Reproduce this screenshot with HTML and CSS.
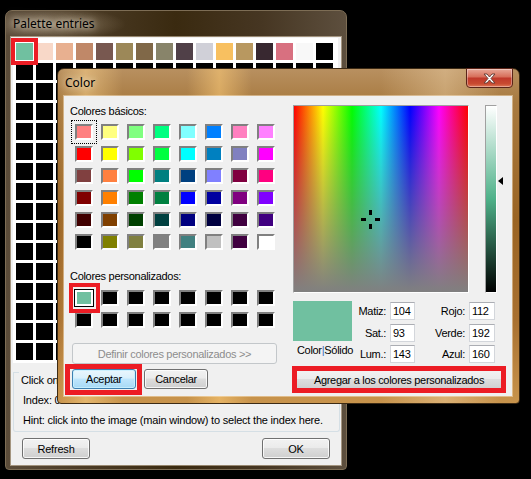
FILE: index.html
```html
<!DOCTYPE html>
<html>
<head>
  <meta charset="utf-8">
  <link rel="stylesheet" href="styles.css">
</head>
<body>
  <div class="desktop">

    <div class="window palette-window">
      <div class="window-title">Palette entries</div>
      <div class="window-client palette-client">
        <div class="palette-panel">
          <div class="palette-row">
            <div class="palette-cell" style="background:#70c0a0"></div>
            <div class="palette-cell" style="background:#f8d8c8"></div>
            <div class="palette-cell" style="background:#e8b090"></div>
            <div class="palette-cell" style="background:#c08868"></div>
            <div class="palette-cell" style="background:#785850"></div>
            <div class="palette-cell" style="background:#9c8858"></div>
            <div class="palette-cell" style="background:#806848"></div>
            <div class="palette-cell" style="background:#88846a"></div>
            <div class="palette-cell" style="background:#504048"></div>
            <div class="palette-cell" style="background:#d0d0d8"></div>
            <div class="palette-cell" style="background:#f8c060"></div>
            <div class="palette-cell" style="background:#b89860"></div>
            <div class="palette-cell" style="background:#382830"></div>
            <div class="palette-cell" style="background:#d87080"></div>
            <div class="palette-cell" style="background:#f8f8f8"></div>
            <div class="palette-cell" style="background:#000000"></div>
          </div>
          <!-- the other 240 entries are all still black -->
          <div class="palette-rest"></div>
        </div>

        <div class="group">
          <div class="group-head"><span class="group-caption">Click on</span></div>
          <div class="group-line">Index: 0</div>
          <div class="group-line">Hint: click into the image (main window) to select the index here.</div>
        </div>

        <div class="palette-buttons">
          <button class="btn">Refresh</button>
          <button class="btn">OK</button>
        </div>
      </div>
    </div>

    <div class="window color-window">
      <div class="window-title">
        Color
        <div class="close-btn">
          <svg width="13" height="11" viewBox="0 0 13 11">
            <path d="M1 1h3l2.5 3 2.5-3h3l-4 4.5 4 4.5h-3l-2.5-3-2.5 3h-3l4-4.5z" fill="#fff" stroke="#6a4038" stroke-width="1"/>
          </svg>
        </div>
      </div>
      <div class="window-client color-client">
        <div class="color-left">
          <div class="label label-basic">Colores básicos:</div>
          <div class="swatches">
            <div class="swatch focus" style="background:#ff8080"></div>
            <div class="swatch" style="background:#ffff80"></div>
            <div class="swatch" style="background:#80ff80"></div>
            <div class="swatch" style="background:#00ff80"></div>
            <div class="swatch" style="background:#80ffff"></div>
            <div class="swatch" style="background:#0080ff"></div>
            <div class="swatch" style="background:#ff80c0"></div>
            <div class="swatch" style="background:#ff80ff"></div>

            <div class="swatch" style="background:#ff0000"></div>
            <div class="swatch" style="background:#ffff00"></div>
            <div class="swatch" style="background:#80ff00"></div>
            <div class="swatch" style="background:#00ff40"></div>
            <div class="swatch" style="background:#00ffff"></div>
            <div class="swatch" style="background:#0080c0"></div>
            <div class="swatch" style="background:#8080c0"></div>
            <div class="swatch" style="background:#ff00ff"></div>

            <div class="swatch" style="background:#804040"></div>
            <div class="swatch" style="background:#ff8040"></div>
            <div class="swatch" style="background:#00ff00"></div>
            <div class="swatch" style="background:#008080"></div>
            <div class="swatch" style="background:#004080"></div>
            <div class="swatch" style="background:#8080ff"></div>
            <div class="swatch" style="background:#800040"></div>
            <div class="swatch" style="background:#ff0080"></div>

            <div class="swatch" style="background:#800000"></div>
            <div class="swatch" style="background:#ff8000"></div>
            <div class="swatch" style="background:#008000"></div>
            <div class="swatch" style="background:#008040"></div>
            <div class="swatch" style="background:#0000ff"></div>
            <div class="swatch" style="background:#0000a0"></div>
            <div class="swatch" style="background:#800080"></div>
            <div class="swatch" style="background:#8000ff"></div>

            <div class="swatch" style="background:#400000"></div>
            <div class="swatch" style="background:#804000"></div>
            <div class="swatch" style="background:#004000"></div>
            <div class="swatch" style="background:#004040"></div>
            <div class="swatch" style="background:#000080"></div>
            <div class="swatch" style="background:#000040"></div>
            <div class="swatch" style="background:#400040"></div>
            <div class="swatch" style="background:#400080"></div>

            <div class="swatch" style="background:#000000"></div>
            <div class="swatch" style="background:#808000"></div>
            <div class="swatch" style="background:#808040"></div>
            <div class="swatch" style="background:#808080"></div>
            <div class="swatch" style="background:#408080"></div>
            <div class="swatch" style="background:#c0c0c0"></div>
            <div class="swatch" style="background:#400040"></div>
            <div class="swatch" style="background:#ffffff"></div>
          </div>

          <div class="label label-custom">Colores personalizados:</div>
          <div class="swatches swatches-custom">
            <div class="swatch current" style="background:#70c0a0"></div>
            <div class="swatch"></div>
            <div class="swatch"></div>
            <div class="swatch"></div>
            <div class="swatch"></div>
            <div class="swatch"></div>
            <div class="swatch"></div>
            <div class="swatch"></div>
            <div class="swatch"></div>
            <div class="swatch"></div>
            <div class="swatch"></div>
            <div class="swatch"></div>
            <div class="swatch"></div>
            <div class="swatch"></div>
            <div class="swatch"></div>
            <div class="swatch"></div>
          </div>

          <button class="btn btn-wide" disabled>Definir colores personalizados &gt;&gt;</button>
          <div class="dialog-buttons">
            <button class="btn btn-default">Aceptar</button>
            <button class="btn">Cancelar</button>
          </div>
        </div>

        <div class="color-right">
          <div class="picker-row">
            <div class="spectrum">
              <svg class="crosshair" width="19" height="19" viewBox="0 0 19 19">
                <rect x="8" y="0" width="3" height="5"/>
                <rect x="8" y="14" width="3" height="5"/>
                <rect x="0" y="8" width="5" height="3"/>
                <rect x="14" y="8" width="5" height="3"/>
              </svg>
            </div>
            <div class="lum">
              <div class="lum-bar"></div>
              <div class="lum-arrow"></div>
            </div>
          </div>

          <div class="values">
            <div class="preview">
              <div class="preview-box"></div>
              <div class="preview-label">Color<span class="sep">|</span>Sólido</div>
            </div>
            <div class="fields">
              <label>Matiz:</label><div class="field">104</div>
              <label>Rojo:</label><div class="field">112</div>
              <label>Sat.:</label><div class="field">93</div>
              <label>Verde:</label><div class="field">192</div>
              <label>Lum.:</label><div class="field">143</div>
              <label>Azul:</label><div class="field">160</div>
            </div>
          </div>

          <button class="btn btn-add">Agregar a los colores personalizados</button>
        </div>
      </div>
    </div>

    <!-- red highlight boxes drawn over the screenshot -->
    <div class="marker marker-cell"></div>
    <div class="marker marker-custom"></div>
    <div class="marker marker-ok"></div>
    <div class="marker marker-add"></div>
  </div>
</body>
</html>
```

FILE: styles.css
```css
body {
  margin: 0;
  background: #000;
  font-family: "Liberation Sans", Arial, sans-serif;
  font-size: 11px;
  color: #000;
}

.desktop {
  position: relative;
  width: 531px;
  height: 479px;
  overflow: hidden;
  background: #000;
}

/* Window frames */
.window {
  position: absolute;
  box-sizing: border-box;
  display: flex;
  flex-direction: column;
  border: 1px solid;
  border-radius: 7px 7px 4px 4px;
}

.window-title {
  display: flex;
  align-items: flex-start;
  font-family: "Noto Sans", "Open Sans", sans-serif;
  font-size: 12px;
  color: #000;
  text-shadow: 0 0 6px rgba(255, 246, 230, 0.9), 0 0 12px rgba(255, 246, 230, 0.6);
}

.window-client {
  background: #f0f0f0;
  box-shadow: 0 0 0 1px rgba(255, 240, 215, 0.45);
}

.palette-window {
  left: 5px;
  top: 10px;
  width: 342px;
  height: 460px;
  padding: 0 5px 4px;
  border-color: #7d6d55;
  background:
    radial-gradient(ellipse 70px 16px at 50px 13px, rgba(255, 235, 205, 0.35), rgba(255, 235, 205, 0)),
    linear-gradient(90deg, #5b4c3a 0%, #4a3a24 25%, #3a2a10 50%, #463622 75%, #5d4f3e 100%);
}

.palette-window .window-title {
  height: 26px;
  line-height: 26px;
  margin: 0 -5px;
  padding: 0 7px;
}

.color-window {
  left: 57px;
  top: 68px;
  width: 463px;
  height: 336px;
  padding: 0 7px 7px 6px;
  border-color: #3c2a14;
  background:
    linear-gradient(90deg, rgba(255, 214, 140, 0) 0, rgba(255, 214, 140, 0.5) 6%, rgba(255, 214, 140, 0) 14%, rgba(255, 214, 140, 0) 28%, rgba(255, 205, 120, 0.55) 35%, rgba(255, 205, 120, 0) 42%, rgba(255, 230, 190, 0) 70%, rgba(255, 230, 190, 0.35) 84%, rgba(255, 230, 190, 0) 96%),
    linear-gradient(180deg, #b89060 0, #a87a40 10%, #9a6424 45%, #a87030 75%, #c8944c 100%);
}

.color-window .window-title {
  height: 27px;
  line-height: 27px;
  margin: 0 -7px 0 -6px;
  padding-left: 7px;
}

.close-btn {
  display: flex;
  align-items: center;
  justify-content: center;
  box-sizing: border-box;
  width: 47px;
  height: 20px;
  margin: -1px 6px 0 auto;
  border: 1px solid #5a2418;
  border-radius: 0 0 4px 4px;
  background: linear-gradient(#e8a898 0%, #d8705c 42%, #c0392b 52%, #c84a30 82%, #e07a5a 100%);
  box-shadow: inset 0 0 0 1px rgba(255, 255, 255, 0.35);
}

/* Palette entries window */
.palette-client {
  flex: 1;
  display: flex;
  flex-direction: column;
  letter-spacing: -0.2px;
}

.palette-panel {
  margin: 1px 3px 0 2px;
  padding: 5px 5px 3px 3px;
  background: #fff;
}

.palette-row {
  display: grid;
  grid-template-columns: repeat(16, 17px);
  column-gap: 3px;
}

.palette-cell {
  height: 17px;
}

.palette-rest {
  height: 297px;
  margin-top: 3px;
  background-color: #000;
  background-image:
    linear-gradient(90deg, transparent 17px, #fff 17px),
    linear-gradient(180deg, transparent 17px, #fff 17px);
  background-size: 20px 20px;
}

.group {
  margin: 9px 1px 0 2px;
  padding-bottom: 4px;
  border: 1px solid #d5dfe5;
  border-top: 0;
  border-radius: 0 0 3px 3px;
}

.group-head {
  display: flex;
  line-height: 13px;
  white-space: nowrap;
  overflow: hidden;
}

.group-head::before {
  content: "";
  flex: none;
  width: 5px;
  border-top: 1px solid #d5dfe5;
}

.group-head::after {
  content: "";
  flex: 1;
  border-top: 1px solid #d5dfe5;
}

.group-caption {
  padding: 2px 2px 0;
}

.group-line {
  margin-top: 7px;
  padding-left: 9px;
  line-height: 13px;
  white-space: nowrap;
}

.palette-buttons {
  display: flex;
  justify-content: space-between;
  padding: 6px 11px 0;
}

.palette-buttons .btn {
  width: 68px;
  height: 21px;
}

/* Buttons */
.btn {
  box-sizing: border-box;
  padding: 0;
  font-family: inherit;
  font-size: 11px;
  letter-spacing: inherit;
  color: #000;
  border: 1px solid #707070;
  border-radius: 3px;
  background: linear-gradient(#f2f2f2 0%, #ebebeb 45%, #dddddd 50%, #cfcfcf 100%);
  box-shadow: inset 0 0 0 1px rgba(255, 255, 255, 0.8);
}

.btn-default {
  border-color: #3c7fb1;
  background: linear-gradient(#eaf6fd 0%, #d9f0fc 45%, #bee6fd 50%, #a7d9f5 100%);
  box-shadow: inset 0 0 0 1px rgba(200, 240, 255, 0.9);
}

.btn:disabled {
  color: #8d8d8d;
  border-color: #c3c7ca;
  background: #f4f4f4;
  box-shadow: none;
}

/* Color dialog */
.color-client {
  height: 300px;
  display: grid;
  grid-template-columns: 229px 1fr;
  letter-spacing: -0.3px;
}

.color-left {
  padding-left: 6px;
}

.label {
  line-height: 13px;
}

.label-basic {
  margin-top: 9px;
}

.label-custom {
  margin-top: 20px;
}

.swatches {
  display: grid;
  grid-template-columns: repeat(8, 18px);
  column-gap: 8px;
  row-gap: 6px;
  margin: 6px 0 0 5px;
}

.swatches-custom {
  margin-top: 7px;
}

.swatch {
  box-sizing: border-box;
  width: 18px;
  height: 16px;
  background: #000;
  border: 2px solid;
  border-color: #808080 #fff #fff #808080;
}

.swatch.focus {
  outline: 1px dotted #000;
  outline-offset: 3px;
}

.swatch.current {
  border-color: #fff;
  outline: 1px solid #000;
}

.btn-wide {
  display: block;
  width: 205px;
  height: 21px;
  margin: 15px 0 0 2px;
}

.dialog-buttons {
  display: flex;
  gap: 8px;
  margin: 5px 0 0 2px;
}

.dialog-buttons .btn {
  width: 64px;
  height: 20px;
}

.color-right {
  padding-top: 9px;
}

.picker-row {
  display: flex;
  align-items: flex-start;
}

.spectrum {
  position: relative;
  box-sizing: border-box;
  width: 176px;
  height: 188px;
  border: 1px solid;
  border-color: #a0a0a0 #fff #fff #a0a0a0;
  background:
    linear-gradient(180deg, rgba(128, 128, 128, 0), #808080),
    linear-gradient(90deg, #f00, #ff0 16.67%, #0f0 33.33%, #0ff 50%, #00f 66.67%, #f0f 83.33%, #f00);
}

.crosshair {
  position: absolute;
  left: 67px;
  top: 104px;
  fill: #000;
}

.lum {
  position: relative;
  margin-left: 16px;
}

.lum-bar {
  box-sizing: border-box;
  width: 12px;
  height: 188px;
  border: 1px solid;
  border-color: #a0a0a0 #fff #fff #a0a0a0;
  background: linear-gradient(#fff, #4eb189 50%, #000);
}

.lum-arrow {
  position: absolute;
  left: 13px;
  top: 72px;
  width: 0;
  height: 0;
  border-right: 5px solid #000;
  border-top: 4.5px solid transparent;
  border-bottom: 4.5px solid transparent;
}

.values {
  display: flex;
  margin-top: 8px;
}

.preview {
  width: 64px;
}

.preview-box {
  width: 59px;
  height: 40px;
  background: #70c0a0;
}

.preview-label {
  margin-top: 3px;
  line-height: 13px;
  text-align: center;
}

.sep {
  color: #3a6fc0;
}

.fields {
  display: grid;
  grid-template-columns: 29px 25px 46px 26px;
  grid-auto-rows: 18px;
  column-gap: 4px;
  row-gap: 3.5px;
  padding-top: 1px;
}

.fields label {
  text-align: right;
  line-height: 18px;
}

.field {
  box-sizing: border-box;
  padding-left: 2px;
  line-height: 16px;
  background: #fff;
  border: 1px solid #d3d6db;
  border-top-color: #abadb3;
}

.btn-add {
  display: block;
  width: 210px;
  height: 21px;
  margin: 6px 0 0 1px;
}

/* Red annotation boxes */
.marker {
  position: absolute;
  box-sizing: border-box;
  border: 4px solid #ec1c24;
}

.marker-cell {
  left: 11px;
  top: 38px;
  width: 27px;
  height: 27px;
}

.marker-custom {
  left: 69px;
  top: 283px;
  width: 31px;
  height: 30px;
}

.marker-ok {
  left: 65px;
  top: 364px;
  width: 77px;
  height: 31px;
  border-width: 5px;
}

.marker-add {
  left: 292px;
  top: 366px;
  width: 214px;
  height: 27px;
  border-width: 5px;
}
```
